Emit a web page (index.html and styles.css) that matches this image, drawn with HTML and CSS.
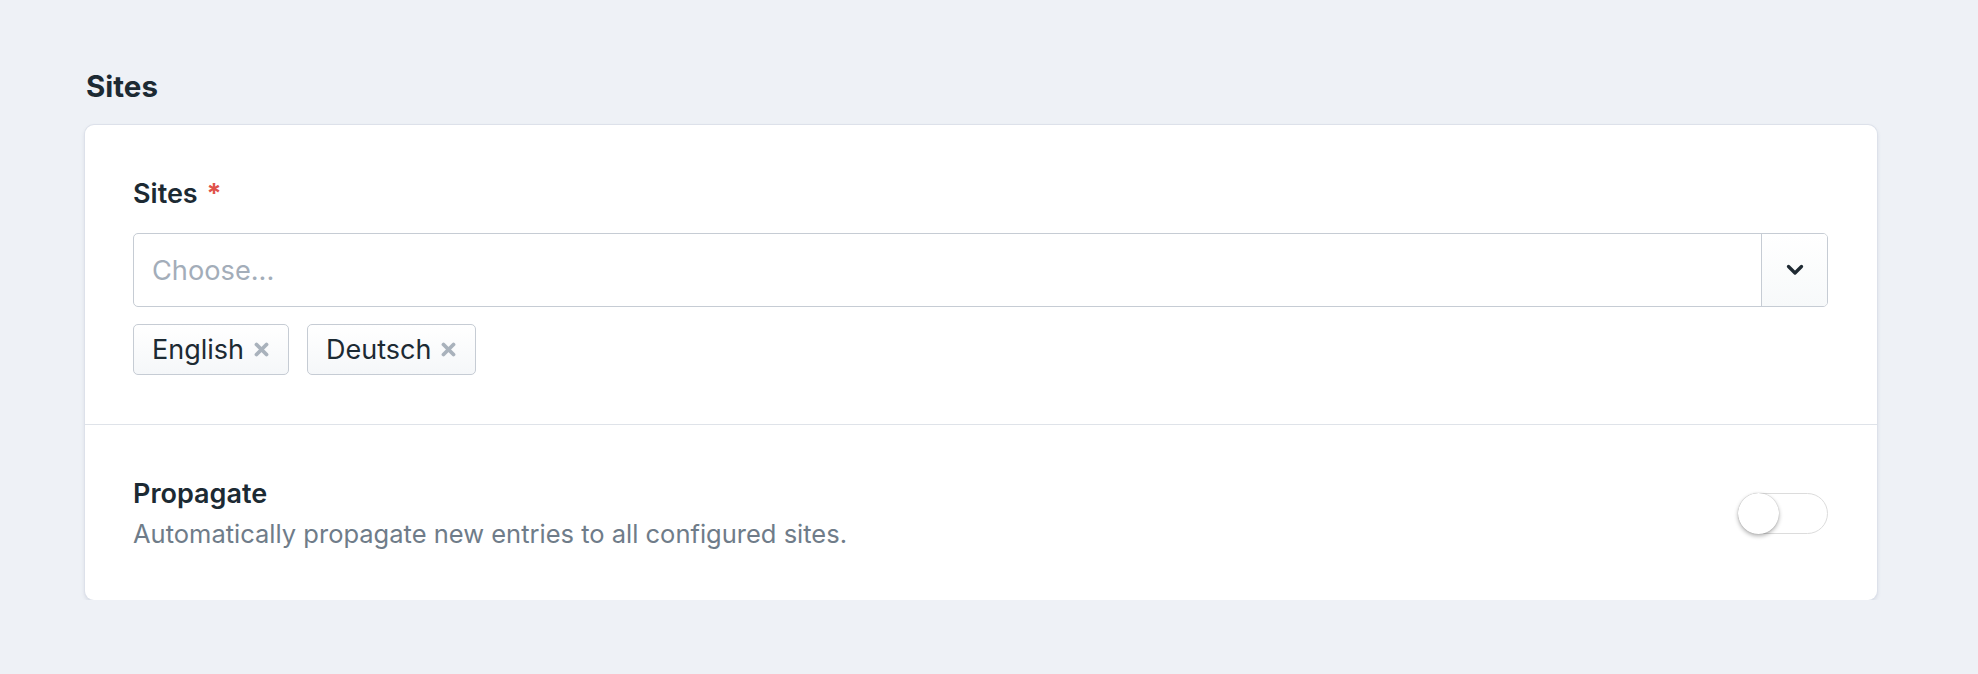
FILE: index.html
```html
<!DOCTYPE html>
<html lang="en">
<head>
<meta charset="utf-8">
<title>Sites</title>
<link rel="stylesheet" href="styles.css">
</head>
<body>
<main class="page">
  <h2 class="section-title">Sites</h2>
  <div class="card">
    <div class="card-section">
      <label class="field-label">Sites <span class="required">*</span></label>
      <div class="select">
        <div class="select-input">Choose...</div>
        <div class="select-toggle">
          <svg width="18" height="12" viewBox="0 0 18 12"><polyline points="2.5,2.5 9,9 15.5,2.5" fill="none" stroke="#1f2a33" stroke-width="3.3" stroke-linecap="round" stroke-linejoin="round"/></svg>
        </div>
      </div>
      <div class="tags">
        <span class="tag">English<svg class="tag-x" width="15" height="15" viewBox="0 0 15 15"><path d="M2.5 2.5 L12.5 12.5 M12.5 2.5 L2.5 12.5" stroke="#a9b2bc" stroke-width="3.8" stroke-linecap="round"/></svg></span>
        <span class="tag">Deutsch<svg class="tag-x" width="15" height="15" viewBox="0 0 15 15"><path d="M2.5 2.5 L12.5 12.5 M12.5 2.5 L2.5 12.5" stroke="#a9b2bc" stroke-width="3.8" stroke-linecap="round"/></svg></span>
      </div>
    </div>
    <div class="card-section row">
      <div class="row-text">
        <div class="field-label">Propagate</div>
        <div class="field-help">Automatically propagate new entries to all configured sites.</div>
      </div>
      <div class="toggle"><span class="knob"></span></div>
    </div>
  </div>
</main>
</body>
</html>
```
FILE: styles.css
```css
html, body {
  margin: 0;
  padding: 0;
}
body {
  background: #eef1f6;
  font-family: Inter, "Noto Sans", "Liberation Sans", sans-serif;
  color: #1c2a33;
}
.page {
  padding: 68px 101px 0 85px;
}
.section-title {
  margin: 0 0 21px 1px;
  font-size: 29.5px;
  line-height: 36px;
  font-weight: 700;
  color: #1c2a33;
}
.card {
  background: #fff;
  border-radius: 9px;
  box-shadow: 0 0 0 1px #dde1ea, 0 2px 4px rgba(90, 100, 130, 0.2);
}
.card-section {
  padding: 53px 49px 49px 48px;
}
.card-section + .card-section {
  border-top: 1px solid #dfe3e9;
}
.field-label {
  display: block;
  font-size: 27px;
  line-height: 32px;
  font-weight: 600;
  color: #1c2a33;
}
.required {
  color: #e0524a;
  font-weight: 700;
  margin-left: 2px;
}
.select {
  margin-top: 23px;
  display: flex;
  height: 74px;
  box-sizing: border-box;
  border: 1.5px solid #c6ccd4;
  border-radius: 5px;
  overflow: hidden;
}
.select-input {
  flex: 1;
  display: flex;
  align-items: center;
  padding-left: 18px;
  font-size: 27.2px;
  color: #a3adb9;
}
.select-toggle {
  width: 65px;
  border-left: 1.5px solid #c6ccd4;
  background: linear-gradient(#fff, #f7f9fa);
  display: flex;
  align-items: center;
  justify-content: center;
}
.tags {
  margin-top: 17px;
  display: flex;
  gap: 18px;
}
.tag {
  display: inline-flex;
  align-items: center;
  gap: 10px;
  height: 51px;
  box-sizing: border-box;
  padding: 0 19px 0 18px;
  border: 1.5px solid #c6ccd4;
  border-radius: 5px;
  background: linear-gradient(#fff, #f5f7f9);
  font-size: 27px;
  color: #1c2a33;
}
.row {
  display: flex;
  align-items: center;
  justify-content: space-between;
  padding-top: 53px;
  padding-bottom: 51px;
}
.field-help {
  margin-top: 9px;
  font-size: 25.5px;
  line-height: 30px;
  color: #6f7c89;
}
.toggle {
  width: 90px;
  height: 41px;
  box-sizing: border-box;
  border: 1.5px solid #dcdcdc;
  border-radius: 21px;
  position: relative;
  background: #fff;
}
.knob {
  position: absolute;
  left: -1.5px;
  top: -1.5px;
  width: 41px;
  height: 41px;
  border-radius: 50%;
  background: #fff;
  box-shadow: 0 2px 4px rgba(0, 0, 0, 0.3), 0 0 1px rgba(0, 0, 0, 0.3);
}
```
